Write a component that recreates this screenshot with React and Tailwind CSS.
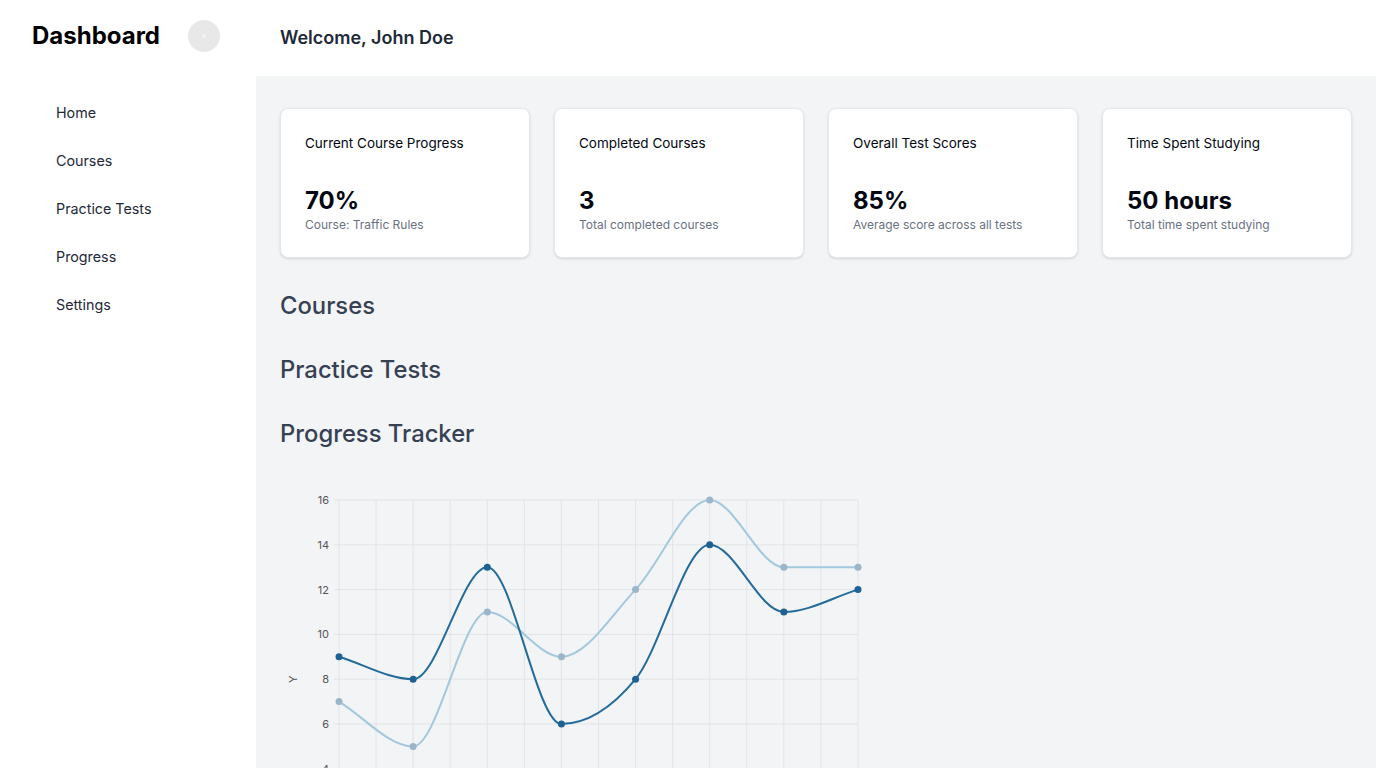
import React from "react";

const PLOT_L = 59;
const PLOT_R = 578;
const PLOT_T = 18;
const UNIT = 22.4; // px per 1 y-unit

const dark = [9, 8, 13, 6, 8, 14, 11, 12];
const light = [7, 5, 11, 9, 12, 16, 13, 13];

const xAt = (i) => PLOT_L + (i * (PLOT_R - PLOT_L)) / 7;
const yAt = (v) => PLOT_T + (16 - v) * UNIT;

function monotonePath(vals) {
  const pts = vals.map((v, i) => ({ x: xAt(i), y: yAt(v) }));
  const n = pts.length;
  const d = [];
  for (let i = 0; i < n - 1; i++) d.push((pts[i + 1].y - pts[i].y) / (pts[i + 1].x - pts[i].x));
  const m = [];
  for (let i = 0; i < n; i++) {
    if (i === 0) m.push(d[0]);
    else if (i === n - 1) m.push(d[n - 2]);
    else if (Math.sign(d[i - 1]) !== Math.sign(d[i])) m.push(0);
    else m.push((d[i - 1] + d[i]) / 2);
  }
  for (let i = 0; i < n - 1; i++) {
    if (Math.abs(d[i]) < 1e-9) {
      m[i] = 0;
      m[i + 1] = 0;
      continue;
    }
    const a = m[i] / d[i];
    const b = m[i + 1] / d[i];
    const s = a * a + b * b;
    if (s <= 9) continue;
    const t = 3 / Math.sqrt(s);
    m[i] = a * t * d[i];
    m[i + 1] = b * t * d[i];
  }
  let p = `M${pts[0].x},${pts[0].y}`;
  for (let i = 0; i < n - 1; i++) {
    const dx = (pts[i + 1].x - pts[i].x) / 3;
    p += ` C${pts[i].x + dx},${pts[i].y + m[i] * dx} ${pts[i + 1].x - dx},${pts[i + 1].y - m[i + 1] * dx} ${pts[i + 1].x},${pts[i + 1].y}`;
  }
  return p;
}

function Chart() {
  const vLines = Array.from({ length: 15 }, (_, i) => PLOT_L + (i * (PLOT_R - PLOT_L)) / 14);
  const ticks = [16, 14, 12, 10, 8, 6, 4, 2, 0];
  const bottom = yAt(0);
  const mid = (PLOT_T + bottom) / 2;
  return (
    <svg width="620" height="430" className="block" style={{ fontFamily: "Inter, 'Liberation Sans', sans-serif" }}>
      {vLines.map((x, i) => (
        <line key={"v" + i} x1={x} y1={PLOT_T} x2={x} y2={bottom + 6} stroke="#e2e4e7" strokeWidth="1" />
      ))}
      {ticks.map((t) => (
        <g key={"h" + t}>
          <line x1={PLOT_L - 5} y1={yAt(t)} x2={PLOT_R} y2={yAt(t)} stroke="#e2e4e7" strokeWidth="1" />
          <text x={PLOT_L - 10} y={yAt(t) + 4} fontSize="11" fill="#555" textAnchor="end">
            {t}
          </text>
        </g>
      ))}
      <text x="13" y={mid + 4} fontSize="11" fill="#555" textAnchor="middle" transform={`rotate(-90 13 ${mid})`}>
        Y
      </text>
      <path d={monotonePath(light)} fill="none" stroke="#a3c8dd" strokeWidth="2" />
      <path d={monotonePath(dark)} fill="none" stroke="#226b9b" strokeWidth="2" />
      {light.map((v, i) => (
        <circle key={"lp" + i} cx={xAt(i)} cy={yAt(v)} r="3.5" fill="#9bb6c8" />
      ))}
      {dark.map((v, i) => (
        <circle key={"dp" + i} cx={xAt(i)} cy={yAt(v)} r="3.5" fill="#1d6292" />
      ))}
    </svg>
  );
}

const stats = [
  { title: "Current Course Progress", value: "70%", sub: "Course: Traffic Rules" },
  { title: "Completed Courses", value: "3", sub: "Total completed courses" },
  { title: "Overall Test Scores", value: "85%", sub: "Average score across all tests" },
  { title: "Time Spent Studying", value: "50 hours", sub: "Total time spent studying" },
];

const nav = ["Home", "Courses", "Practice Tests", "Progress", "Settings"];

export default function App() {
  return (
    <div className="flex min-h-screen bg-white" style={{ fontFamily: "Inter, 'Liberation Sans', sans-serif" }}>
      <aside className="w-64 shrink-0 bg-white">
        <div className="flex h-[72px] items-center justify-between pl-8 pr-9">
          <span className="text-2xl font-bold text-black">Dashboard</span>
          <button className="flex h-8 w-8 items-center justify-center rounded-full bg-[#e8e8e8]">
            <span className="h-1 w-1 rounded-full bg-[#f0f0f0]" />
          </button>
        </div>
        <nav className="flex flex-col pt-[17px] pl-14">
          {nav.map((n) => (
            <a key={n} className="py-3 text-[14.3px] leading-6 text-gray-800">
              {n}
            </a>
          ))}
        </nav>
      </aside>
      <main className="flex min-w-0 flex-1 flex-col">
        <header className="flex h-[76px] items-center bg-white px-6">
          <h1 className="text-lg font-semibold text-gray-800">Welcome, John Doe</h1>
        </header>
        <div className="flex-1 bg-gray-100 px-6 pt-8">
          <div className="grid grid-cols-4 gap-6">
            {stats.map((s) => (
              <div key={s.title} className="h-[150px] rounded-lg border border-gray-200 bg-white p-6 shadow-sm">
                <div className="text-[13.5px] leading-5 font-normal text-gray-950">{s.title}</div>
                <div className="mt-8 text-2xl font-bold text-gray-950">{s.value}</div>
                <div className="text-xs text-gray-500">{s.sub}</div>
              </div>
            ))}
          </div>
          <h2 className="mt-8 text-[23.8px] leading-8 font-medium text-gray-700">Courses</h2>
          <h2 className="mt-8 text-[23.8px] leading-8 font-medium text-gray-700">Practice Tests</h2>
          <h2 className="mt-8 text-[23.8px] leading-8 font-medium text-gray-700">Progress Tracker</h2>
          <div className="mt-8">
            <Chart />
          </div>
        </div>
      </main>
    </div>
  );
}
